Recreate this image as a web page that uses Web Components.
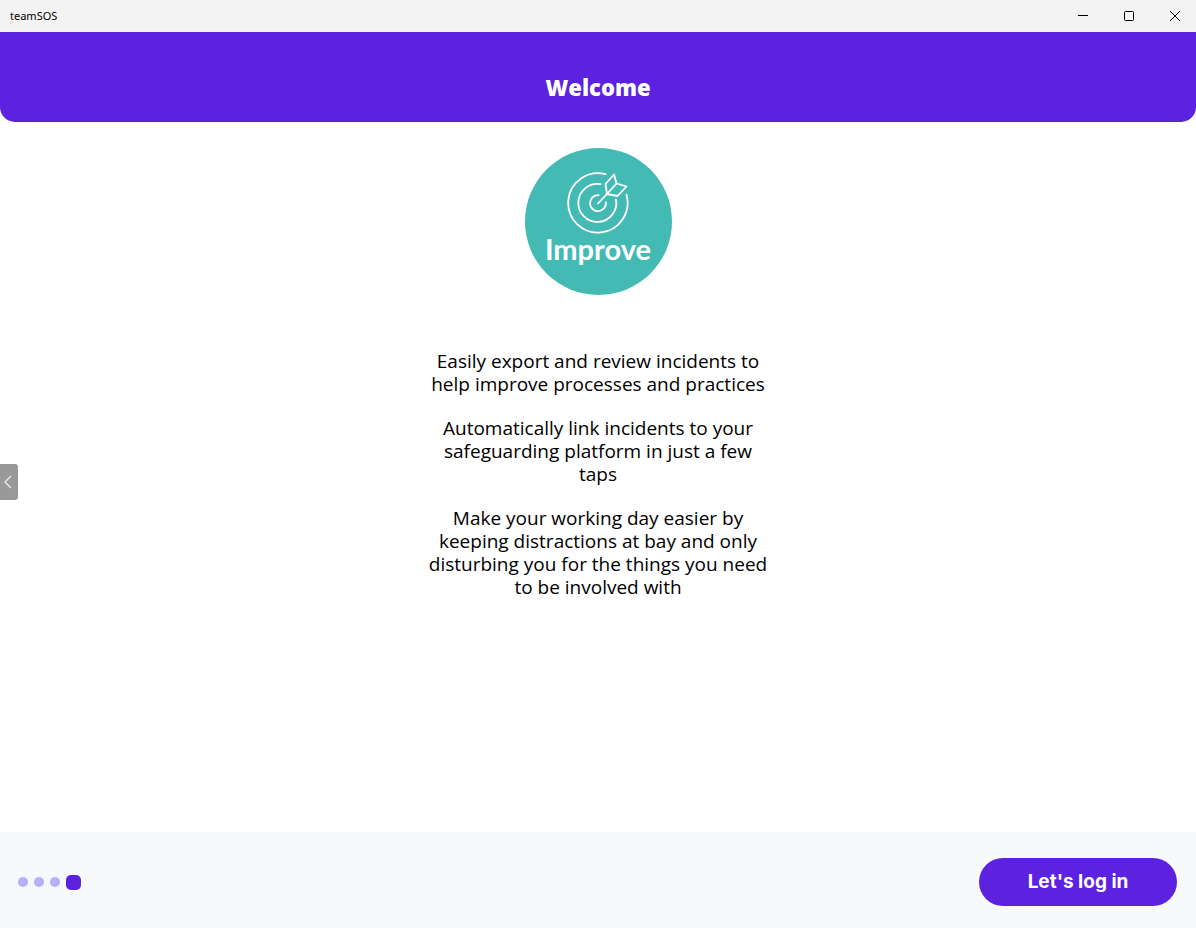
<!DOCTYPE html>
<html lang="en">
<head>
<meta charset="utf-8">
<title>teamSOS</title>
<style>
html, body { height: 100%; margin: 0; }
body { background: #fff; color: #000; font-family: "Open Sans", "Noto Sans", sans-serif; --brand: #5d22e0; --brand-soft: #b7b0fa; }
</style>
</head>
<body>
<welcome-app></welcome-app>
<script>
function define(name, html) {
  const template = document.createElement('template');
  template.innerHTML = html;
  customElements.define(name, class extends HTMLElement {
    constructor() {
      super();
      this.attachShadow({ mode: 'open' }).append(template.content.cloneNode(true));
    }
  });
}

define('window-bar', `
<style>
:host { display: flex; justify-content: space-between; height: 32px; background: #f3f3f3; font: 11px/32px "Noto Sans", sans-serif; }
.title { padding-left: 10px; }
.controls { display: flex; }
button { width: 46px; border: 0; padding: 0 0 0 4px; background: none; display: grid; place-items: center; color: #000; }
svg { display: block; fill: none; stroke: currentColor; }
</style>
<span class="title"><slot></slot></span>
<div class="controls">
<button aria-label="Minimize"><svg width="10" height="10"><path d="M0 4.5h10"/></svg></button>
<button aria-label="Maximize"><svg width="10" height="10"><rect x=".5" y=".5" width="9" height="9" rx="1"/></svg></button>
<button aria-label="Close"><svg width="10" height="10"><path d="M0 0l10 10M10 0L0 10"/></svg></button>
</div>`);

define('page-header', `
<style>
:host { display: flex; justify-content: center; align-items: flex-end; height: 90px; box-sizing: border-box; padding-bottom: 19px; background: var(--brand); color: #fff; border-radius: 0 0 15px 15px; }
h1 { margin: 0; font: 800 22px/32px "Open Sans", sans-serif; }
</style>
<h1><slot></slot></h1>`);

define('improve-badge', `
<style>
:host { display: flex; flex-direction: column; align-items: center; box-sizing: border-box; width: 147px; height: 147px; padding-top: 23px; border-radius: 50%; background: #43bab4; color: #fff; }
svg { display: block; fill: none; stroke: currentColor; stroke-width: 1.8; stroke-linecap: round; stroke-linejoin: round; }
span { font: 700 29px/28px Lato, sans-serif; }
</style>
<svg width="64" height="64" viewBox="0 0 64 64" aria-hidden="true">
<path d="M39.500 3.200A29.700 29.700 0 1 0 60.400 23.600"/>
<path d="M34.500 13.200A19 19 0 1 0 50 28.500"/>
<path d="M32.500 24.100A8 8 0 1 0 40 31.500"/>
<path d="M32 32.500L41 23L50.500 12.500M41 23L39.500 13L48 3.500L50.500 12.500L60.500 15.500L51.500 25L41 23"/>
</svg>
<span><slot></slot></span>`);

define('welcome-copy', `
<style>
:host { display: flex; flex-direction: column; gap: 21px; text-align: center; font-size: 19px; line-height: 23px; }
::slotted(p) { margin: 0; }
</style>
<slot></slot>`);

define('drawer-handle', `
<style>
:host { display: block; }
button { display: grid; place-items: center start; width: 18px; height: 36px; border: 0; padding: 0 0 0 3px; background: #999; border-radius: 0 3px 3px 0; color: #eee; }
svg { display: block; fill: none; stroke: currentColor; stroke-width: 1.2; }
</style>
<button aria-label="Open panel"><svg width="10" height="14"><path d="M8 1L2 7l6 6"/></svg></button>`);

define('step-dots', `
<style>
:host { display: flex; align-items: center; gap: 6px; }
i { width: 10px; height: 10px; border-radius: 50%; background: var(--brand-soft); }
.current { width: 15px; height: 15px; border-radius: 5px; background: var(--brand); }
</style>
<i></i><i></i><i></i><i class="current"></i>`);

define('pill-button', `
<style>
:host { display: block; }
button { display: block; width: 198px; height: 48px; padding: 0; border: 0; border-radius: 24px; background: var(--brand); color: #fff; font: 700 19px/24px Inter, sans-serif; }
</style>
<button><slot></slot></button>`);

define('welcome-app', `
<style>
:host { display: flex; flex-direction: column; min-height: 100vh; }
main { position: relative; flex: 1; display: flex; flex-direction: column; align-items: center; gap: 55px; padding: 26px 20px; }
drawer-handle { position: absolute; left: 0; top: 342px; }
footer { display: flex; align-items: center; justify-content: space-between; box-sizing: border-box; min-height: 96px; padding: 4px 19px 0 18px; background: #f8f9fb; }
</style>
<window-bar>teamSOS</window-bar>
<page-header>Welcome</page-header>
<main>
<improve-badge>Improve</improve-badge>
<welcome-copy>
<p>Easily export and review incidents to<br>help improve processes and practices</p>
<p>Automatically link incidents to your<br>safeguarding platform in just a few<br>taps</p>
<p>Make your working day easier by<br>keeping distractions at bay and only<br>disturbing you for the things you need<br>to be involved with</p>
</welcome-copy>
<drawer-handle></drawer-handle>
</main>
<footer>
<step-dots role="img" aria-label="Step 4 of 4"></step-dots>
<pill-button>Let's log in</pill-button>
</footer>`);
</script>
</body>
</html>
